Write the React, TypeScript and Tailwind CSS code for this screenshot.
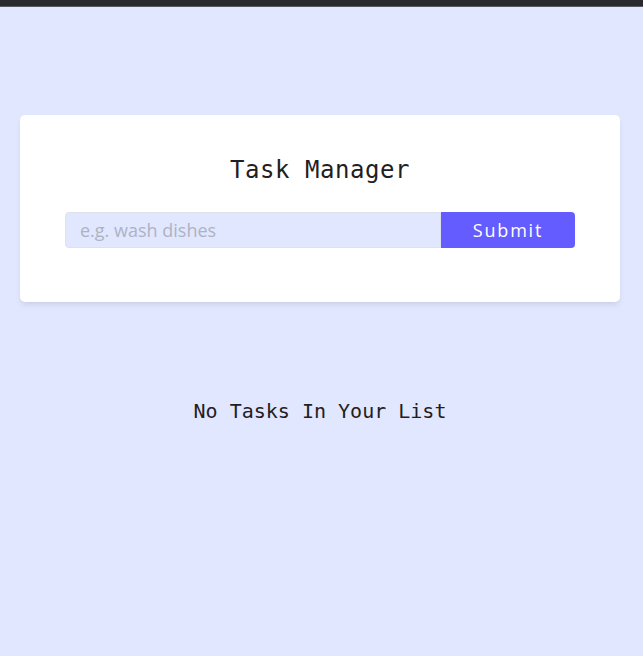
import React, { useState } from "react";

export default function App() {
  const [value, setValue] = useState("");
  return (
    <div className="min-h-[656px] bg-[#e0e7ff] flex flex-col">
      <div className="h-[6px] bg-[#2a2a2c]" />
      <div className="h-[1px] bg-[#5a5a5e]" />
      <div className="w-[640px]">
        <div className="mt-[108px] mx-[20px] bg-white rounded-[5px] shadow-[0_4px_6px_-1px_rgba(0,0,0,0.08),0_2px_4px_-2px_rgba(0,0,0,0.06)] px-[45px] pt-[37px] pb-[54px]">
          <h3 className="text-center text-[24px] leading-[36px] tracking-[0.55px] text-[#1f2022] font-['DejaVu_Sans_Mono',monospace]">
            Task Manager
          </h3>
          <form
            className="mt-[24px] flex"
            onSubmit={(e) => e.preventDefault()}
          >
            <input
              value={value}
              onChange={(e) => setValue(e.target.value)}
              placeholder="e.g. wash dishes"
              className="flex-1 min-w-0 h-[36px] bg-[#e0e7ff] border border-[#dde1ee] rounded-l-[4px] pl-[14px] text-[18px] text-[#333] placeholder:text-[#aeb3c4] outline-none font-['Open_Sans',sans-serif]"
            />
            <button
              type="submit"
              className="w-[134px] h-[36px] bg-[#645cff] text-white rounded-r-[4px] text-[18px] tracking-[1.8px] font-['Open_Sans',sans-serif]"
            >
              Submit
            </button>
          </form>
        </div>
        <p className="mt-[94px] text-center text-[20px] leading-[30px] text-[#1f2022] font-['DejaVu_Sans_Mono',monospace]">
          No Tasks In Your List
        </p>
      </div>
    </div>
  );
}
